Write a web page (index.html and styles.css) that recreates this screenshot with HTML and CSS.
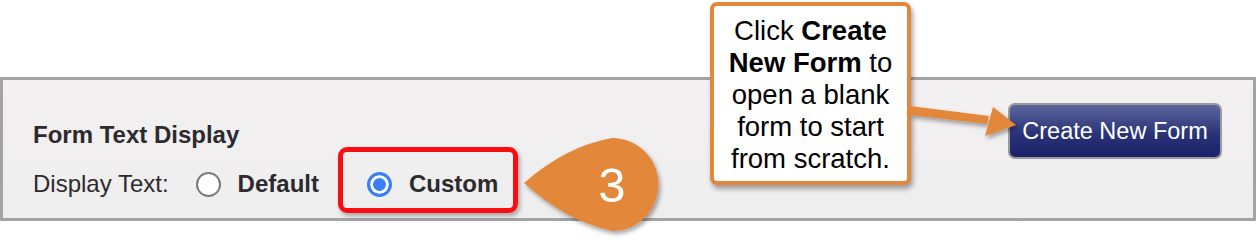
FILE: index.html
```html
<!DOCTYPE html>
<html lang="en">
<head>
    <meta charset="UTF-8">
    <meta name="viewport" content="width=device-width, initial-scale=1.0">
    <title>Form Text Display</title>
    <link rel="stylesheet" href="styles.css">
</head>
<body>
    <div class="page">
        <div class="top-space"></div>

        <!-- Settings panel -->
        <div class="panel">
            <div class="settings">
                <h3 class="settings-title">Form Text Display</h3>
                <div class="option-row">
                    <span class="option-label">Display Text:</span>
                    <label class="option">
                        <span class="radio"></span>
                        <span class="option-text">Default</span>
                    </label>
                    <label class="option option-custom">
                        <span class="radio checked"></span>
                        <span class="option-text">Custom</span>
                    </label>
                </div>
            </div>
            <button class="create-btn" type="button">Create New Form</button>

            <!-- highlight around the Custom option -->
            <div class="highlight"></div>
        </div>

        <!-- Annotations -->
        <div class="callout">
            Click <strong>Create New Form</strong> to open a blank form to start from scratch.
        </div>

        <svg class="annotations" width="1256" height="244" viewBox="0 0 1256 244">
            <defs>
                <filter id="shadow" x="-20%" y="-20%" width="140%" height="140%">
                    <feDropShadow dx="2" dy="3" stdDeviation="2" flood-color="#000" flood-opacity="0.35"/>
                </filter>
            </defs>
            <!-- arrow from callout to button -->
            <g filter="url(#shadow)" fill="#e3883a">
                <polygon points="910,106 989,116 987,124 910,115"/>
                <polygon points="1016,125 993,107 985,136"/>
            </g>
            <!-- step marker -->
            <path filter="url(#shadow)" fill="#e3883a"
                  d="M 524 183 Q 566 146 612 138 A 46.5 46.5 0 1 1 612 231 Q 566 221 524 183 Z"/>
            <text x="612" y="202" class="step-num" text-anchor="middle">3</text>
        </svg>
    </div>
</body>
</html>
```

FILE: styles.css
```css
/* page layout */
body {
    margin: 0;
    padding: 0;
    background-color: #fff;
    font-family: "Liberation Sans", Arial, sans-serif;
    color: #2d2a2e;
}

.page {
    position: relative;
    width: 1256px;
    height: 244px;
    overflow: hidden;
}

.top-space {
    height: 77px;
}

.panel {
    position: relative;
    display: flex;
    justify-content: space-between;
    align-items: flex-start;
    height: 138px;
    border: 3px solid #a3a3a3;
    background: linear-gradient(#f2f0f1, #efeeef);
}

.settings {
    padding: 41px 0 0 30px;
}

.settings-title {
    margin: 0;
    font-size: 24px;
    line-height: 28px;
    font-weight: bold;
}

.option-row {
    display: flex;
    align-items: center;
    margin-top: 21px;
    height: 28px;
    font-size: 24px;
}

.option-label {
    margin-right: 27px;
}

.option {
    display: flex;
    align-items: center;
    gap: 17px;
    font-weight: bold;
}

.option-custom {
    margin-left: 48px;
}

.radio {
    box-sizing: border-box;
    width: 25px;
    height: 25px;
    border: 2px solid #7a7a7a;
    border-radius: 50%;
    background-color: #fff;
}

.radio.checked {
    border: 3px solid #3a7ff6;
    box-shadow: inset 0 0 0 3px #fff;
    background-color: #3a7ff6;
}

.create-btn {
    margin: 23px 31px 0 0;
    width: 214px;
    height: 56px;
    padding: 0;
    border: 2px solid #9a9a9a;
    border-radius: 7px;
    background: linear-gradient(#5d679b, #2a3378 55%, #1a226a);
    color: #fff;
    font-family: "Liberation Sans", Arial, sans-serif;
    font-size: 23.5px;
    cursor: pointer;
}

.highlight {
    position: absolute;
    left: 335px;
    top: 67px;
    width: 180px;
    height: 66px;
    box-sizing: border-box;
    border: 5px solid #f70d12;
    border-radius: 9px;
    box-shadow: 2px 3px 4px rgba(0, 0, 0, 0.3);
}

.callout {
    position: absolute;
    left: 710px;
    top: 2px;
    width: 201px;
    height: 183px;
    box-sizing: border-box;
    padding: 9px 4px 0;
    border: 4px solid #e3883a;
    border-radius: 7px;
    background-color: #fff;
    box-shadow: 2px 4px 5px rgba(0, 0, 0, 0.35);
    color: #000;
    font-size: 27.5px;
    line-height: 32px;
    text-align: center;
}

.annotations {
    position: absolute;
    left: 0;
    top: 0;
    pointer-events: none;
}

.step-num {
    fill: #fff;
    font-family: "Liberation Sans", Arial, sans-serif;
    font-size: 49px;
}
```
